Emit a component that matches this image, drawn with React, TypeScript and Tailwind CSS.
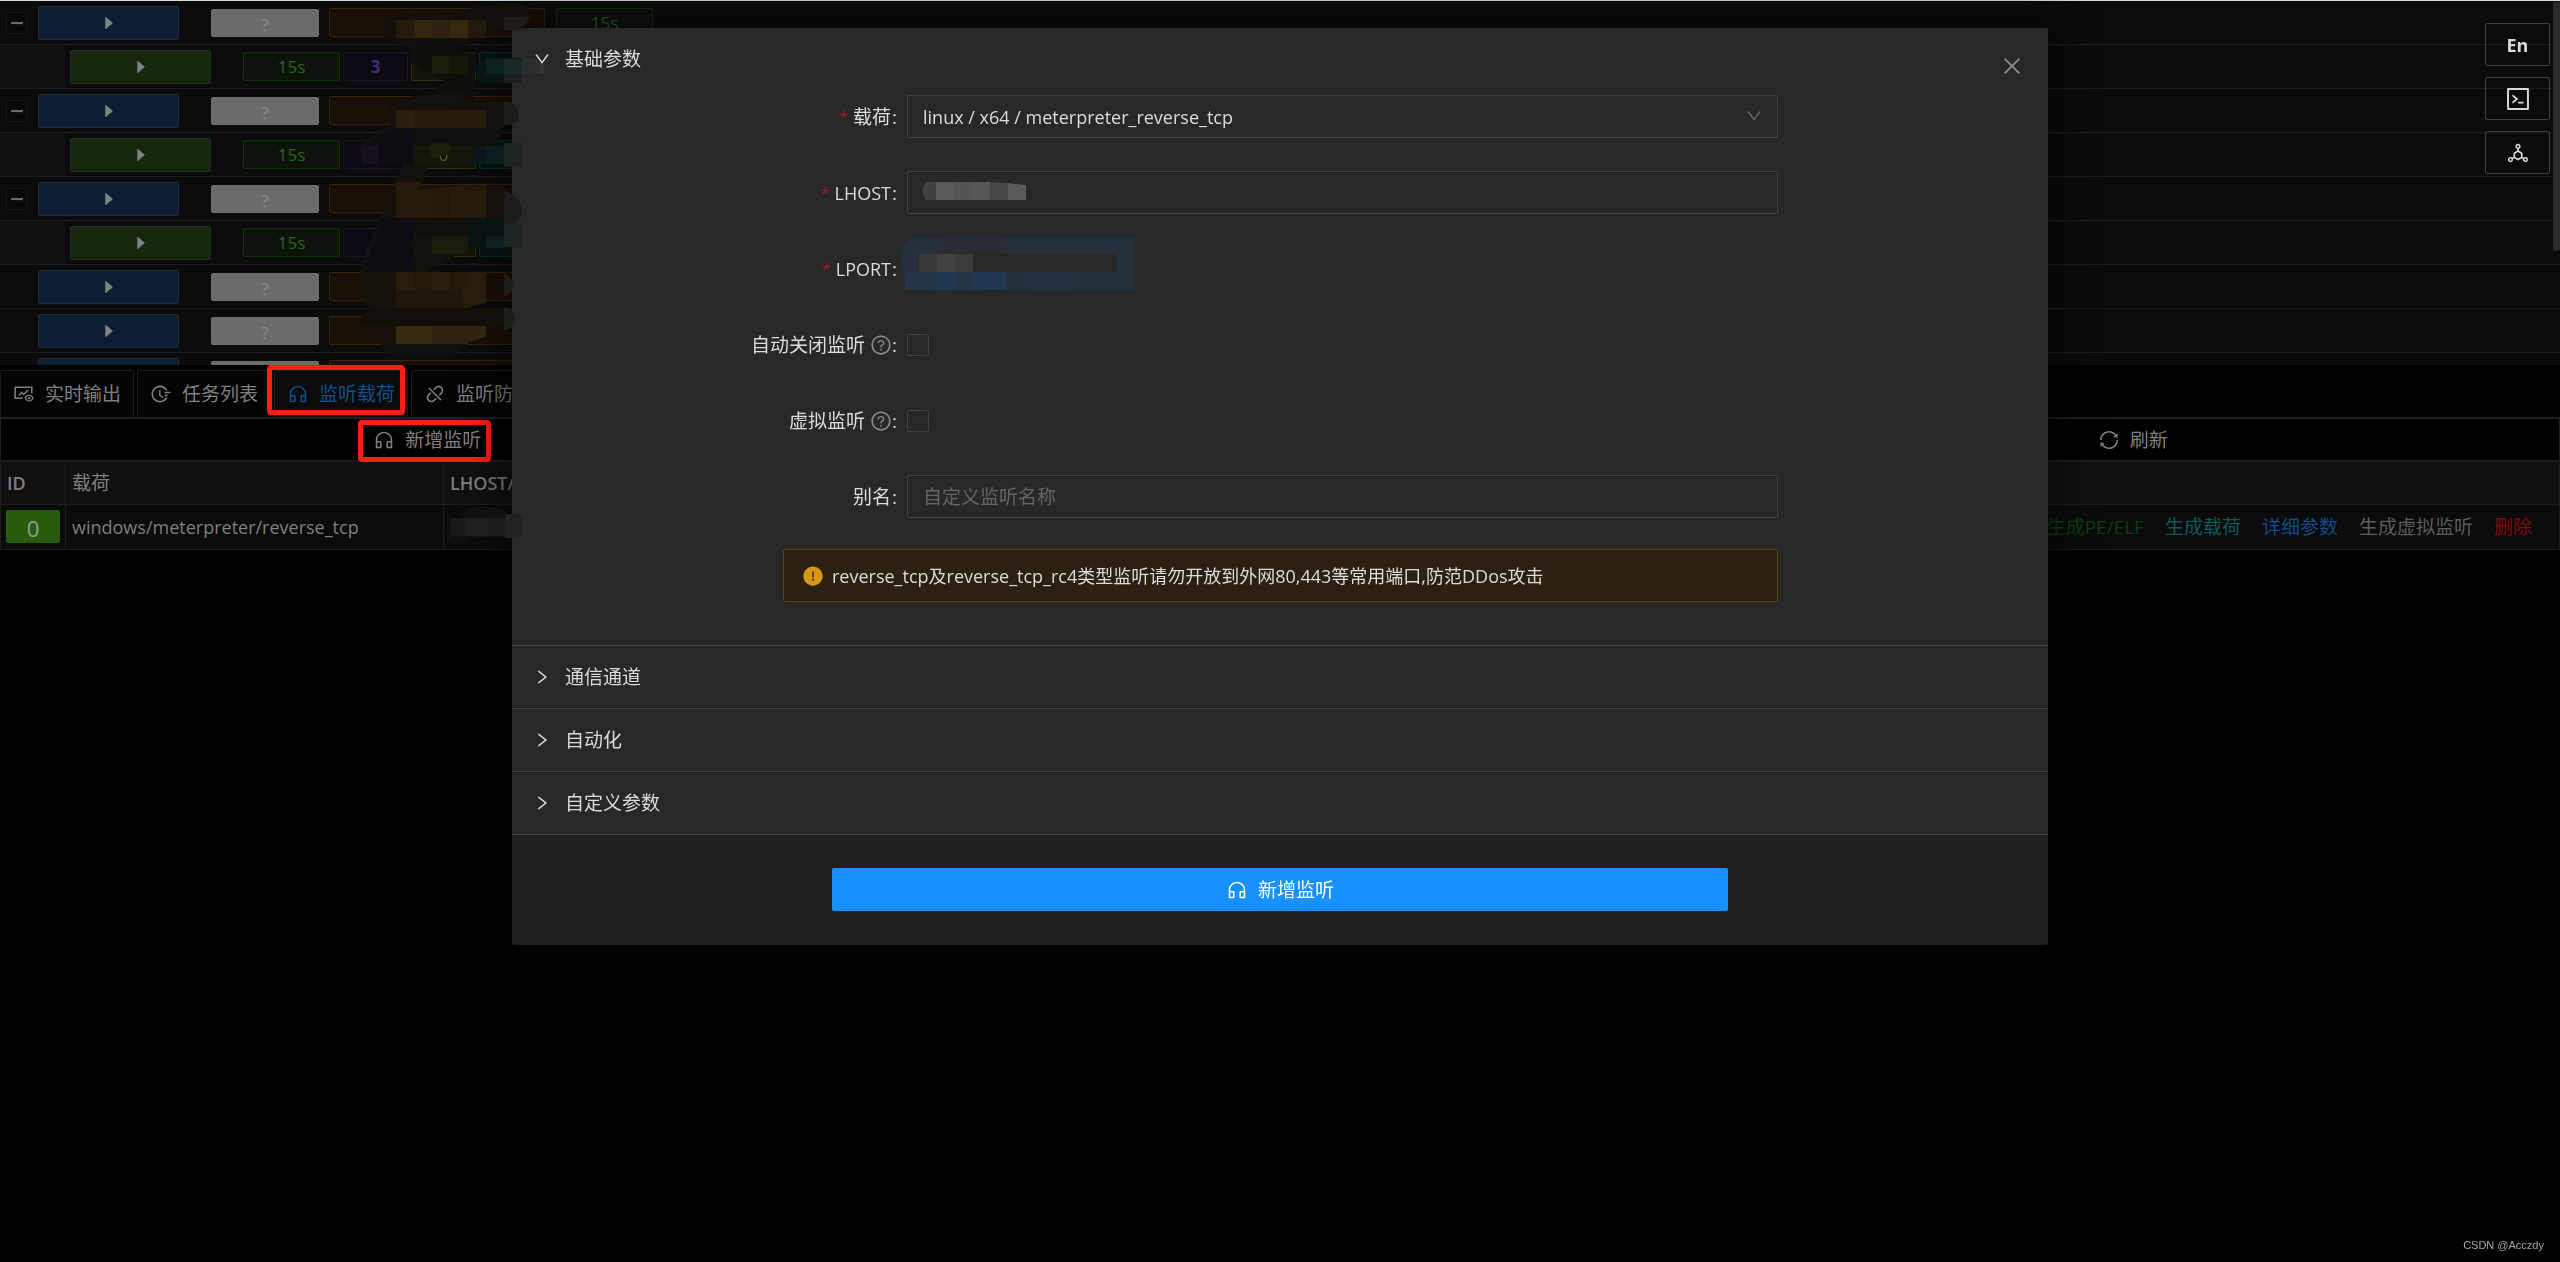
import clsx from 'clsx';
import { ElementType, ReactNode } from 'react';
import {
  AiFillCaretRight,
  AiFillExclamationCircle,
  AiOutlineClose,
  AiOutlineCode,
  AiOutlineCustomerService,
  AiOutlineDeploymentUnit,
  AiOutlineDisconnect,
  AiOutlineDown,
  AiOutlineFieldTime,
  AiOutlineFundView,
  AiOutlineMinus,
  AiOutlineQuestionCircle,
  AiOutlineRight,
  AiOutlineSync,
} from 'react-icons/ai';

// Host rows and the sessions below them.
const rows = [
  { id: 0, type: 'host', open: true, os: '?', heartbeat: '15s' },
  { id: 1, type: 'session', count: '3' },
  { id: 2, type: 'host', open: true, os: '?' },
  { id: 3, type: 'session', level: '0' },
  { id: 4, type: 'host', open: true, os: '?' },
  { id: 5, type: 'session', count: '1' },
  { id: 6, type: 'host', os: '?' },
  { id: 7, type: 'host', os: '?' },
  { id: 8, type: 'host' },
];

const tabs = [
  { label: '实时输出', Icon: AiOutlineFundView },
  { label: '任务列表', Icon: AiOutlineFieldTime },
  { label: '监听载荷', Icon: AiOutlineCustomerService, active: true },
  { label: '监听防火墙', Icon: AiOutlineDisconnect },
];

const actions = [
  { label: '生成PE/ELF', color: 'text-[#0a4208]' },
  { label: '生成载荷', color: 'text-[#0a5a5a]' },
  { label: '详细参数', color: 'text-[#104a8c]' },
  { label: '生成虚拟监听', color: 'text-[#5c5c5c]' },
  { label: '删除', color: 'text-[#860808]' },
];

const sections = ['通信通道', '自动化', '自定义参数'];

export default function App() {
  return (
    <div className="relative min-h-screen bg-black border-t border-[#d5dcda] text-[19px] leading-7 text-[#7f7f7f] font-['Open_Sans','Noto_Sans_CJK_SC',sans-serif]">
      <SessionList />
      <ListenerPanel />
      <SideTools />
      <ListenerModal />
      <ListMosaic />
      <p className="fixed right-4 bottom-2 text-[11px] leading-4.5 text-[#a5a5a5] font-['Liberation_Sans',sans-serif]">
        CSDN @Acczdy
      </p>
    </div>
  );
}

function SessionList() {
  return (
    <section className="h-[364px] overflow-hidden bg-[#0b0b0b] text-[17px]">
      {rows.map((row) =>
        row.type === 'host' ? (
          <div
            key={row.id}
            className="flex items-center h-11 pl-1.5 border-b border-[#1b1b1b]"
          >
            {row.open ? (
              <button
                aria-label="collapse"
                className="flex items-center justify-center w-[21px] h-[22px] rounded-xs border border-[#151515] bg-[#080808] text-[#858585]"
              >
                <AiOutlineMinus className="size-4" strokeWidth={40} />
              </button>
            ) : (
              <div className="w-[21px]" />
            )}
            <PlayButton className="ml-[11px] bg-[#0c1e33]" />
            <div className="ml-8 w-[108px] h-7 rounded-xs bg-[#6b6b6b] text-[#8c8c8c] text-center leading-8">
              {row.os}
            </div>
            <Tag className="ml-2.5 w-[216px] border-[#352409] bg-[#191007]" />
            <Tag className="ml-[11px] w-[97px] border-[#173010] bg-[#0b130a] text-[#30621b]">
              {row.heartbeat}
            </Tag>
          </div>
        ) : (
          <div
            key={row.id}
            className="flex items-center h-11 border-b border-[#1b1b1b] bg-[#101010]"
          >
            <div className="ml-[65px] flex grow items-center gap-[3px] h-10.5 pl-[5px] rounded-sm bg-[#0b0b0b]">
              <PlayButton className="mr-[29px] bg-[#16270c]" />
              <Tag className="w-[97px] border-[#173010] bg-[#0b130a] text-[#30621b]">
                15s
              </Tag>
              <Tag className="w-[65px] border-[#1d122c] bg-[#0d0913] text-[#4b2a79] font-bold">
                {row.count}
              </Tag>
              <Tag className="w-[65px] border-[#2b310c] bg-[#12150a] text-[#56661a]">
                {row.level}
              </Tag>
              <Tag className="w-[97px] border-[#0c2f30] bg-[#081314]" />
            </div>
          </div>
        ),
      )}
    </section>
  );
}

function PlayButton({ className }: { className: string }) {
  return (
    <button
      aria-label="session"
      className={clsx(
        'flex items-center justify-center w-[141px] h-8.5 rounded-xs border border-[#242a30] text-[#818181]',
        className,
      )}
    >
      <AiFillCaretRight className="size-4.5" />
    </button>
  );
}

function Tag({ className, children }: { className: string; children?: ReactNode }) {
  return (
    <div
      className={clsx(
        'flex items-center justify-center h-[29px] shrink-0 rounded-xs border',
        className,
      )}
    >
      {children}
    </div>
  );
}

function ListenerPanel() {
  return (
    <section>
      <nav className="flex gap-[3px] pt-[5px] border-b-2 border-[#202020]">
        {tabs.map((tab) => (
          <TabButton key={tab.label} {...tab} />
        ))}
      </nav>
      <div className="grid grid-cols-3 h-[41px] border-x border-[#202020]">
        <div className="flex items-center justify-center">
          <div className="relative">
            <ToolButton label="新增监听" Icon={AiOutlineCustomerService} />
            <Marker className="-left-[15px] -right-[10px] -top-1.5 -bottom-2" />
          </div>
        </div>
        <div />
        <div className="flex items-center justify-center">
          <ToolButton label="刷新" Icon={AiOutlineSync} />
        </div>
      </div>
      <ListenerTable />
    </section>
  );
}

interface TabButtonProps {
  label: string;
  Icon: ElementType;
  active?: boolean;
}
function TabButton({ label, Icon, active }: TabButtonProps) {
  return (
    <button
      className={clsx(
        'relative flex items-center gap-2.5 h-[47px] px-3 rounded-t-xs border border-b-0 border-[#1c1c1c]',
        active ? 'bg-[#0b0b0b] text-[#10508f]' : 'bg-[#040404]',
      )}
    >
      <Icon className="size-[22px]" />
      {label}
      {active && <Marker className="-left-2 right-0.5 -top-1.5 bottom-0.5" />}
    </button>
  );
}

// Red frame around the step to click.
function Marker({ className }: { className: string }) {
  return (
    <div
      className={clsx('absolute rounded-sm border-5 border-[#ff1e10]', className)}
      aria-hidden
    />
  );
}

function ToolButton({ label, Icon }: { label: string; Icon: ElementType }) {
  return (
    <button className="flex items-center gap-2.5">
      <Icon className="size-[22px]" />
      {label}
    </button>
  );
}

function ListenerTable() {
  return (
    <table className="w-full border-collapse border border-[#1c1c1c] text-left">
      <thead>
        <tr className="h-[43px] bg-[#101010] border-b border-[#1c1c1c] border-t-2">
          <th className="w-[65px] px-1.5 border-r border-[#1c1c1c] text-lg font-semibold">ID</th>
          <th className="w-[378px] px-1.5 border-r border-[#1c1c1c] font-normal">载荷</th>
          <th className="px-1.5 text-lg font-semibold">LHOST/RHOST</th>
          <th />
        </tr>
      </thead>
      <tbody>
        <tr className="h-[45px] bg-[#0b0b0b]">
          <td className="px-[5px] border-r border-[#1c1c1c]">
            <div className="h-[33px] rounded-xs bg-[#275c0d] text-[#989898] text-center text-[22px] leading-9">
              0
            </div>
          </td>
          <td className="px-1.5 border-r border-[#1c1c1c] text-lg">
            windows/meterpreter/reverse_tcp
          </td>
          <td className="px-1.5">
            <div className="relative h-7">
              <svg
                className="absolute -left-2 -top-1.5 z-30 w-[82px] h-10"
                viewBox="0 0 82 40"
                aria-hidden
              >
                <path d="M6 14h10l10-13q20-3 36 2l6 7h3v20H26q-4 8-14 7-7-1-8-9z" fill="#101010" />
                <path d="M9 11h14v18H9z" fill="#181818" />
                <path d="M23 11h22v18H23z" fill="#1e1e1e" />
                <path d="M45 11h18v18H45z" fill="#1b1b1b" />
                <path d="M63 7h12q4 0 6 4v16q-2 3-8 4H63z" fill="#222" />
              </svg>
            </div>
          </td>
          <td>
            <div className="flex justify-end gap-[21px] pr-[27px]">
              {actions.map(({ label, color }) => (
                <a key={label} href="#" className={color}>
                  {label}
                </a>
              ))}
            </div>
          </td>
        </tr>
      </tbody>
    </table>
  );
}

function SideTools() {
  return (
    <>
      <div className="fixed top-0.5 right-0 w-[7px] h-[249px] rounded-b-xs bg-[#2a2a2a]" />
      <div className="fixed top-[23px] right-2.5 flex flex-col gap-[11px] text-[#d9d9d9]">
        <button className="flex items-center justify-center w-[65px] h-[43px] rounded-xs border border-[#404040] text-lg font-bold">
          En
        </button>
        <button
          aria-label="console"
          className="flex items-center justify-center w-[65px] h-[43px] rounded-xs border border-[#404040]"
        >
          <AiOutlineCode className="size-7" />
        </button>
        <button
          aria-label="network"
          className="flex items-center justify-center w-[65px] h-[43px] rounded-xs border border-[#404040]"
        >
          <AiOutlineDeploymentUnit className="size-6" />
        </button>
      </div>
    </>
  );
}

function ListenerModal() {
  return (
    <div className="fixed inset-0 z-10 flex items-start justify-center pt-7">
      <div
        role="dialog"
        aria-label="新增监听"
        className="relative w-3/5 overflow-hidden rounded-xs bg-[#1f1f1f] text-[#dcdcdc] shadow-[0_0_40px_12px_rgba(0,0,0,0.5)]"
      >
        <button
          aria-label="close"
          className="absolute right-6 top-6.5 text-[#8c8c8c]"
        >
          <AiOutlineClose className="size-6" />
        </button>
        <div className="bg-[#282828]">
          <SectionHeader label="基础参数" Icon={AiOutlineDown} />
          <ListenerForm />
          <div className="border-b border-[#434343]">
            {sections.map((label) => (
              <div key={label} className="border-t border-[#434343]">
                <SectionHeader label={label} Icon={AiOutlineRight} />
              </div>
            ))}
          </div>
        </div>
        <div className="pt-[33px] pb-8.5">
          <button className="flex items-center justify-center gap-2.5 w-7/12 h-[43px] mx-auto rounded-xs bg-[#1890ff] text-white">
            <AiOutlineCustomerService className="size-[22px]" />
            新增监听
          </button>
        </div>
      </div>
    </div>
  );
}

function SectionHeader({ label, Icon }: { label: string; Icon: ElementType }) {
  return (
    <button className="flex items-center gap-3.5 w-full h-[62px] pl-[21px]">
      <Icon className="size-4.5" />
      {label}
    </button>
  );
}

const inputClass =
  'block w-full h-[43px] px-[15px] rounded-xs border border-[#434343] bg-transparent outline-none placeholder:text-[#656565]';
const checkboxClass =
  'block size-5.5 appearance-none rounded-xs border border-[#434343] bg-transparent';

function ListenerForm() {
  return (
    <form className="flex flex-col gap-[33px] pt-[5px] pb-[43px] pl-[240px] pr-[270px]">
      <Field id="payload" label="载荷" required>
        <select id="payload" className={clsx(inputClass, 'appearance-none text-lg')}>
          <option>linux / x64 / meterpreter_reverse_tcp</option>
        </select>
        <AiOutlineDown className="absolute right-[15px] top-3 size-4.5 text-[#6b6b6b]" />
      </Field>
      <Field id="lhost" label="LHOST" required>
        <input id="lhost" className={inputClass} />
        <svg
          className="absolute left-[15px] top-[11px] w-[104px] h-[18px]"
          viewBox="0 0 104 18"
          aria-hidden
        >
          <path d="M4 0h10v18H4Q-3 9 4 0z" fill="#414141" />
          <path d="M14 0h18v18H14z" fill="#595959" />
          <path d="M32 0h18v18H32z" fill="#535353" />
          <path d="M50 0h18v18H50z" fill="#565656" />
          <path d="M68 0l18 1v17H68z" fill="#474747" />
          <path d="M86 1l18 2v15H86z" fill="#5a5a5a" />
        </svg>
      </Field>
      <Field id="lport" label="LPORT" required>
        <input id="lport" className="block w-[230px] h-[43px] bg-transparent outline-none" />
        <svg
          className="absolute -left-1.5 -top-2.5 w-[234px] h-16"
          viewBox="0 0 234 64"
          aria-hidden
        >
          <path d="M4 53h110q-50 3-60 2-8 7-20 7-10-1-20-9z" fill="#282a2d" />
          <path d="M3 8Q8 1 16 1h217v52H4V43Q-3 27 3 8z" fill="#25303a" />
          <path d="M36 1q35-2 70 0v16H36z" fill="#272d33" />
          <path d="M4 35h90v18H4z" fill="#233647" />
          <path d="M36 35h18v18H36zM72 35h34v18H72z" fill="#22384e" />
          <path d="M124 35h54v18h-54z" fill="#25323e" />
          <path d="M18 17h198v18H18z" fill="#282828" />
          <path d="M18 17h18v18H18z" fill="#383838" />
          <path d="M36 17h18v18H36z" fill="#424242" />
          <path d="M54 17h18v18H54z" fill="#3c3c3c" />
        </svg>
      </Field>
      <Field id="auto-close" label="自动关闭监听" help>
        <input id="auto-close" type="checkbox" className={checkboxClass} />
      </Field>
      <Field id="virtual" label="虚拟监听" help>
        <input id="virtual" type="checkbox" className={checkboxClass} />
      </Field>
      <Field id="alias" label="别名">
        <input id="alias" className={inputClass} placeholder="自定义监听名称" />
      </Field>
      <div
        role="alert"
        className="flex items-center gap-2 h-[53px] -mt-0.5 ml-[31px] pl-[18px] rounded-xs border border-[#594214] bg-[#2b2111] text-lg"
      >
        <AiFillExclamationCircle className="size-[22px] text-[#d89614]" />
        reverse_tcp及reverse_tcp_rc4类型监听请勿开放到外网80,443等常用端口,防范DDos攻击
      </div>
    </form>
  );
}

interface FieldProps {
  id: string;
  label: string;
  required?: boolean;
  help?: boolean;
  children: ReactNode;
}
function Field({ id, label, required, help, children }: FieldProps) {
  return (
    <div className="flex items-center gap-2.5 h-[43px]">
      <label
        htmlFor={id}
        className="flex items-center justify-end gap-[5px] w-[145px] whitespace-nowrap"
      >
        {required && <span className="text-[#a61d24] text-base">*</span>}
        <span className={id.startsWith('l') ? 'text-lg' : ''}>{label}</span>
        <span className="flex items-center">
          {help && <AiOutlineQuestionCircle className="size-[22px] text-[#8c8c8c]" />}
          <span className={help ? '' : '-ml-1'}>:</span>
        </span>
      </label>
      <div className="relative grow">{children}</div>
    </div>
  );
}

// Smudged patches that hide the addresses in the session list.
function ListMosaic() {
  return (
    <svg
      className="absolute left-[330px] -top-px z-20 w-60 h-[370px] pointer-events-none"
      viewBox="0 0 720 1110"
      aria-hidden
    >
      <path d="M165 60Q180 44 270 42 400 40 430 22q120-14 150-8 30 14 18 50-20 30-60 26L468 92 350 155l88 60-50 90-122 5-90 20-4-30 130-18 60-52-90-26-30-30v-30l-82-32z" fill="#13100b" />
      <path d="M245 122h180l-60 32 75 6-10 140H290l50-60-96-50z" fill="#0e0f0b" />
      <path d="M198 60h54v54h-54z" fill="#251b0d" />
      <path d="M252 60h54v54h-54z" fill="#33240f" />
      <path d="M306 60h54v54h-54z" fill="#2c2010" />
      <path d="M360 60h54v54h-54z" fill="#36280f" />
      <path d="M414 60h54v54h-54z" fill="#21190d" />
      <path d="M522 50h75q-8 30-40 38l-35 3z" fill="#1f1d1a" />
      <path d="M306 168h54v54h-54z" fill="#1a1e0b" />
      <path d="M360 168h54v54h-54z" fill="#15170b" />
      <path d="M440 200q10-26 40-26h96v75H456q-20-10-16-49z" fill="#0b1314" />
      <path d="M468 176h54v46h-54z" fill="#0b2123" />
      <path d="M522 176h54v46h-54z" fill="#1c2828" />
      <path d="M522 222h54v27h-54z" fill="#1c1f1f" />
      <path d="M576 176h54v46h-54z" fill="#fff" fillOpacity="0.03" />
      <path d="M630 176q16 20 12 46h-12z" fill="#fff" fillOpacity="0.06" />

      <path d="M180 320l118-30 46-14h64l-24 28h140v80h-14q4 40-10 54H468v54H296l-30 78h200l20 140-210 110H90l15-60 55-130 60-140-110 2q-40-30-10-65l90-60z" fill="#12110b" />
      <path d="M198 330h54v54h-54z" fill="#2a2010" />
      <path d="M252 330h108v54H252z" fill="#241b0d" />
      <path d="M360 330h108v54H360z" fill="#261c0d" />
      <path d="M198 384h54v106h-54l-100 2q-16-30 4-54l90-54z" fill="#0e0b12" />
      <path d="M90 438h54v54H96z" fill="#160e1d" />
      <path d="M252 384h262l-12 50H252z" fill="#0e100d" />
      <path d="M252 438h182v54H252z" fill="#14170a" />
      <path d="M306 438h54v22l-54 12z" fill="#1b1f0b" />
      <text x="326" y="484" fontSize="50" fill="#56661a">0</text>
      <path d="M300 430h60v32l-60 12z" fill="#1b1f0b" />
      <path d="M430 438h92v54h-92z" fill="#0a1617" />
      <path d="M468 438h54v54h-54z" fill="#0a1e20" />
      <path d="M522 304q44 4 44 38 0 34-44 34z" fill="#1e1c18" />
      <path d="M522 430l54-4v72l-54 2z" fill="#1c2424" />

      <path d="M198 546h74l-8 24 150-14h54v98H198z" fill="#251b0d" />
      <path d="M306 570h54v84h-54z" fill="#211809" />
      <path d="M468 560h54v94h-54z" fill="#151009" />
      <path d="M155 654h97v162H106q4-50 30-90z" fill="#0e0b12" />
      <path d="M252 654h216l-30 54H252l-8 24 20 84H252z" fill="#0f100c" />
      <path d="M306 708h108v54H306z" fill="#191c0a" />
      <path d="M414 654h108v90H414z" fill="#0a1112" />
      <path d="M468 708h54v36h-54z" fill="#0b2021" />
      <path d="M522 570q54 24 54 60 0 30-24 42h24v70h-54z" fill="#1e1c18" />
      <path d="M522 672h54v70h-54z" fill="#1c2424" />

      <path d="M106 816h92v108h-70q-36-10-38-44z" fill="#15110b" />
      <path d="M198 816h270v92l-60 16H198z" fill="#261d0d" />
      <path d="M252 816h54v54h-54zM360 816h54v54h-54z" fill="#22190c" />
      <path d="M198 870h200v54H198z" fill="#1f170c" />
      <path d="M522 820q26 8 26 36t-26 32z" fill="#1e1c18" />
      <path d="M90 978q2-44 40-54h392v54z" fill="#120f0a" />
      <path d="M522 920q32 6 32 38 0 28-32 36z" fill="#1d1c19" />
      <path d="M198 978h108v54H198z" fill="#38270f" />
      <path d="M306 978h162v30q-16 14-54 16v8H306z" fill="#30230f" />
      <path d="M144 978h54v54h-42z" fill="#18110a" />
      <path d="M156 1032h254q-20 34-60 34H190q-26-8-34-34z" fill="#100f0b" />
    </svg>
  );
}
